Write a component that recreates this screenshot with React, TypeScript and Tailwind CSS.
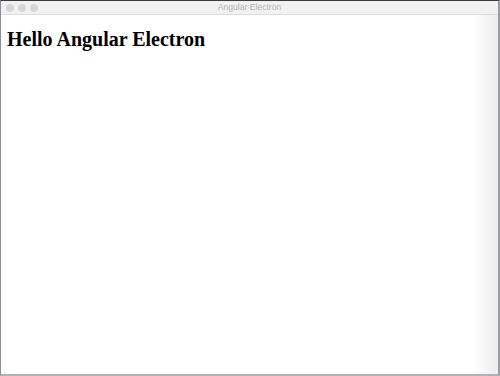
export default function App() {
  return (
    <div className="w-[500px] h-[376px] flex flex-col bg-white border-t border-t-[#3a3a3c] border-l border-l-[#8a9099] border-r-[2px] border-r-[#9a9da2] border-b-[2px] border-b-[#aeb2b6] overflow-hidden">
      {/* Title bar */}
      <div className="relative h-[14px] shrink-0 flex items-center bg-[#f1f1f1] border-b border-[#dcdcdc] px-[5px]">
        <div className="flex gap-[4px]">
          <span className="w-[8px] h-[8px] rounded-full bg-[#d6d6d6]" />
          <span className="w-[8px] h-[8px] rounded-full bg-[#d6d6d6]" />
          <span className="w-[8px] h-[8px] rounded-full bg-[#d6d6d6]" />
        </div>
        <div className="absolute inset-0 flex items-center justify-center text-[8.6px] text-[#b4b4b4] font-['Helvetica','Liberation_Sans',sans-serif]">
          Angular Electron
        </div>
      </div>
      {/* Content */}
      <div className="flex-1 bg-gradient-to-r from-white from-[95%] to-[#ececec] px-[6px] pt-[14px]">
        <h1 className="font-['Liberation_Serif',serif] font-bold text-[20px] leading-none text-black">
          Hello Angular Electron
        </h1>
      </div>
    </div>
  );
}
